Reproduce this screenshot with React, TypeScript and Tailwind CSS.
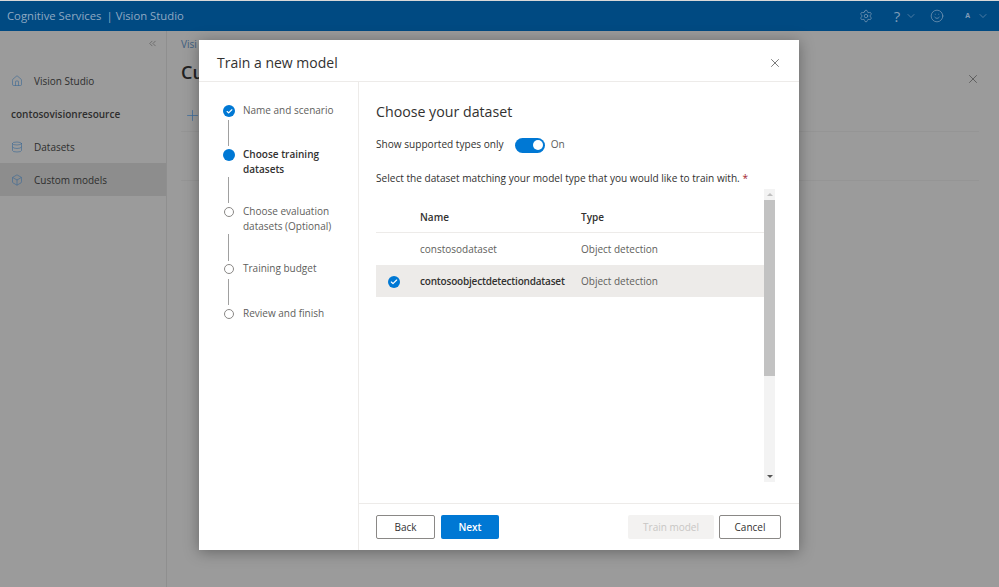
import React from "react";
import { Home, Database, Box, Plus, X, ChevronsLeft, Settings, ChevronDown, Smile, Check } from "lucide-react";

function Step({ state, label, second }: { state: "done" | "active" | "todo"; label: string; second?: string }) {
  return (
    <div className="flex items-start">
      <div className="w-[12px] ml-[24px] h-[16px] flex items-center justify-center shrink-0">
        {state === "done" && (
          <div className="w-[12px] h-[12px] rounded-full bg-[#0078d4] flex items-center justify-center">
            <Check size={7} strokeWidth={4} className="text-white" />
          </div>
        )}
        {state === "active" && <div className="w-[12px] h-[12px] rounded-full bg-[#0078d4]" />}
        {state === "todo" && <div className="w-[10px] h-[10px] rounded-full border border-[#8a8886] bg-white" />}
      </div>
      <div className={`ml-[8px] text-[10px] leading-[15px] ${state === "active" ? "font-semibold text-[#323130]" : "text-[#605e5c]"}`}>
        <div>{label}</div>
        {second && <div>{second}</div>}
      </div>
    </div>
  );
}

function Connector({ h, before, after }: { h: string; before: string; after: string }) {
  return <div className={`ml-[29px] w-[1px] bg-[#a0a0a0] ${h} ${before} ${after}`} />;
}

function NavItem({ icon, label, active }: { icon: React.ReactNode; label: string; active?: boolean }) {
  return (
    <div className={`h-[33px] flex items-center pl-[11px] pt-[1px] ${active ? "bg-[#8d8d8d]" : ""}`}>
      <span className="w-[23px] text-[#3f6a94]">{icon}</span>
      <span className="text-[10px] text-[#2e2e2e]">{label}</span>
    </div>
  );
}

export default function App() {
  return (
    <div className="relative w-[999px] h-[587px] overflow-hidden bg-[#9b9b9b] flex flex-col font-['Open_Sans','Noto_Sans',sans-serif]">
      <header className="h-[31px] shrink-0 border-t border-[#d8d8d8] bg-[#004a82] flex items-center pl-[7px] text-[#8fa9c2] text-[11.3px]">
        <span>Cognitive Services</span>
        <span className="ml-[5px] mr-[3px]">|</span>
        <span>Vision Studio</span>
        <div className="ml-auto flex items-center text-[#7f9cb8]">
          <Settings size={14} strokeWidth={1.2} />
          <span className="ml-[21px] text-[15px] leading-none">?</span>
          <ChevronDown size={12} strokeWidth={1.2} className="ml-[5px]" />
          <Smile size={14} strokeWidth={1.2} className="ml-[13px]" />
          <span className="ml-[21px] text-[7px] font-bold">A</span>
          <ChevronDown size={12} strokeWidth={1.2} className="ml-[7px] mr-[10px]" />
        </div>
      </header>

      <div className="flex flex-1 min-h-0">
        <aside className="w-[167px] shrink-0 border-r border-[#8f8f8f] flex flex-col">
          <div className="h-[25px] flex items-center justify-end pr-[8px] text-[#4f4f4f]">
            <ChevronsLeft size={11} strokeWidth={1.3} />
          </div>
          <div className="mt-[8px]">
            <NavItem icon={<Home size={12} strokeWidth={1.3} />} label="Vision Studio" />
          </div>
          <div className="h-[33px] flex items-center pl-[11px] pt-[1px] text-[10px] font-semibold text-[#2e2e2e]">contosovisionresource</div>
          <NavItem icon={<Database size={12} strokeWidth={1.3} />} label="Datasets" />
          <NavItem icon={<Box size={12} strokeWidth={1.3} />} label="Custom models" active />
        </aside>
        <main className="flex-1 pl-[14px] relative">
          <div className="text-[10px] text-[#3f5f80] mt-[6px]">Visi</div>
          <div className="text-[18px] font-semibold text-[#222] mt-[8px] leading-[24px]">Cu</div>
          <Plus size={17} strokeWidth={1.1} className="text-[#3f6f9f] mt-[23px] ml-[3px]" />
          <div className="h-[1px] bg-[#959595] mt-[7px] mr-[20px]" />
          <div className="h-[1px] bg-[#959595] mt-[48px] mr-[20px]" />
          <X size={14} strokeWidth={1} className="absolute top-[41px] right-[19px] text-[#333]" />
        </main>
      </div>

      {/* dialog */}
      <div className="absolute left-[199px] top-[40px] w-[600px] h-[510px] bg-white flex flex-col shadow-[0_2px_14px_rgba(0,0,0,0.35)]">
        <div className="h-[42px] shrink-0 border-b border-[#edebe9] flex items-center pt-[4px] pl-[18px] pr-[17px]">
          <span className="text-[14px] text-[#323130] font-medium">Train a new model</span>
          <X size={14} strokeWidth={1.2} className="ml-auto text-[#444]" />
        </div>
        <div className="flex flex-1 min-h-0">
          <nav className="w-[160px] shrink-0 border-r border-[#edebe9] pt-[21px]">
            <Step state="done" label="Name and scenario" />
            <Connector h="h-[26px]" before="mt-[1px]" after="mb-[1px]" />
            <Step state="active" label="Choose training" second="datasets" />
            <Connector h="h-[26px]" before="mt-0" after="mb-[1px]" />
            <Step state="todo" label="Choose evaluation" second="datasets (Optional)" />
            <Connector h="h-[27px]" before="mt-0" after="mb-0" />
            <Step state="todo" label="Training budget" />
            <Connector h="h-[26px]" before="mt-[2px]" after="mb-[1px]" />
            <Step state="todo" label="Review and finish" />
          </nav>
          <div className="flex-1 min-w-0 flex flex-col">
            <div className="flex-1 min-h-0 pl-[17px] pr-[24px] pt-[20px] flex flex-col">
              <h2 className="text-[14.2px] leading-[20px] text-[#323130] font-medium">Choose your dataset</h2>
              <div className="flex items-center mt-[15px] h-[16px] text-[10.1px]">
                <span className="font-medium text-[#323130]">Show supported types only</span>
                <span className="ml-[11px] w-[30px] h-[15px] rounded-full bg-[#0078d4] flex items-center justify-end pr-[2px]">
                  <span className="w-[10px] h-[10px] rounded-full bg-white" />
                </span>
                <span className="ml-[6px] text-[#605e5c]">On</span>
              </div>
              <div className="mt-[18px] text-[10.1px] leading-[15px] font-medium text-[#323130]">
                Select the dataset matching your model type that you would like to train with. <span className="text-[#a4262c]">*</span>
              </div>
              <div className="flex mt-[3px] h-[293px]">
                <div className="flex-1 min-w-0 flex flex-col text-[10px]">
                  <div className="h-[44px] pt-[14px] flex items-center border-b border-[#edebe9] font-semibold text-[#323130]">
                    <span className="w-[44px]" />
                    <span className="w-[161px]">Name</span>
                    <span>Type</span>
                  </div>
                  <div className="h-[32px] flex items-center text-[#605e5c]">
                    <span className="w-[44px]" />
                    <span className="w-[161px]">constosodataset</span>
                    <span>Object detection</span>
                  </div>
                  <div className="h-[32px] pt-[1px] flex items-center bg-[#edebe9] text-[#323130]">
                    <span className="w-[44px] pl-[12px]">
                      <span className="w-[12px] h-[12px] rounded-full bg-[#0078d4] flex items-center justify-center">
                        <Check size={8} strokeWidth={3.5} className="text-white" />
                      </span>
                    </span>
                    <span className="w-[161px] font-semibold tracking-[-0.2px] whitespace-nowrap">contosoobjectdetectiondataset</span>
                    <span className="text-[#605e5c]">Object detection</span>
                  </div>
                </div>
                <div className="w-[11px] shrink-0 bg-[#f3f3f3] flex flex-col">
                  <div className="h-[11px] flex items-center justify-center">
                    <span className="w-0 h-0 border-x-[3px] border-x-transparent border-b-[3px] border-b-[#c0c0c0]" />
                  </div>
                  <div className="h-[176px] bg-[#c2c2c2]" />
                  <div className="flex-1" />
                  <div className="h-[11px] flex items-center justify-center">
                    <span className="w-0 h-0 border-x-[3px] border-x-transparent border-t-[3px] border-t-[#555]" />
                  </div>
                </div>
              </div>
            </div>
            <footer className="h-[47px] shrink-0 border-t border-[#edebe9] flex items-center pl-[17px] pr-[18px] text-[10px] font-medium">
              <button className="w-[59px] h-[24px] rounded-[2px] border border-[#8a8886] text-[#323130] bg-white">Back</button>
              <button className="ml-[6px] w-[58px] h-[24px] rounded-[2px] bg-[#0078d4] text-white font-semibold">Next</button>
              <button className="ml-auto w-[86px] h-[24px] rounded-[2px] bg-[#f3f2f1] text-[#c8c6c4]">Train model</button>
              <button className="ml-[5px] w-[62px] h-[24px] rounded-[2px] border border-[#8a8886] text-[#323130] bg-white">Cancel</button>
            </footer>
          </div>
        </div>
      </div>
    </div>
  );
}
